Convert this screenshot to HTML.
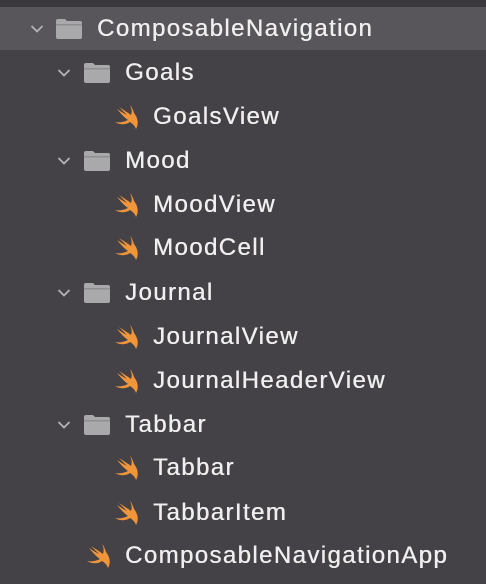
<!DOCTYPE html>
<html><head><style>
body{margin:0;width:486px;height:584px;background:#444246;overflow:hidden;font-family:"Liberation Sans",sans-serif;position:relative}
.top{position:absolute;left:0;top:0;width:486px;height:7px;background:#3b393d}
.sel{position:absolute;left:0;top:7px;width:486px;height:43px;background:#58565a}
.r{position:absolute;height:30px;line-height:30px;font-size:24px;letter-spacing:1.4px;color:#efefef;white-space:nowrap;text-shadow:0.4px 0 0 #efefef}
svg{position:absolute}
</style></head><body>
<div class="top"></div><div class="sel"></div>
<svg width="0" height="0"><defs>
<symbol id="sw" viewBox="0 0 28 28"><path d="M2 18 C7 21 13 21 17 18 C20 20 22 22 23 25 C26 20 25 14 21 9 C20 6 19 3 17 1 C19 5 19 8 18 11 C14 8 9 5 6 3 C9 6 12 9 14 11 C10 9 7 7 4 5 C8 10 12 14 15 16 C11 18 6 19 2 18 Z" fill="#f0953a"/></symbol>
<symbol id="fd" viewBox="0 0 28 22"><path d="M1 3 Q1 1 3 1 H10 L12 3 H25 Q27 3 27 5 V19 Q27 21 25 21 H3 Q1 21 1 19 Z" fill="#a9a8ab"/><rect x="1" y="6" width="26" height="1.5" fill="#8f8e92"/></symbol>
<symbol id="ch" viewBox="0 0 14 10"><path d="M1.5 2 L7 7.5 L12.5 2" stroke="#b4b3b6" stroke-width="1.8" fill="none"/></symbol>
</defs></svg>

<svg style="left:30px;top:24px" width="14" height="10"><use href="#ch"/></svg>
<svg style="left:55px;top:18px" width="28" height="22"><use href="#fd"/></svg>
<div class="r" style="left:97px;top:14px">ComposableNavigation</div>

<svg style="left:57px;top:68px" width="14" height="10"><use href="#ch"/></svg>
<svg style="left:83px;top:62px" width="28" height="22"><use href="#fd"/></svg>
<div class="r" style="left:125px;top:58px">Goals</div>
<svg style="left:113px;top:104px" width="28" height="28"><use href="#sw"/></svg>
<div class="r" style="left:153px;top:102px">GoalsView</div>

<svg style="left:57px;top:156px" width="14" height="10"><use href="#ch"/></svg>
<svg style="left:83px;top:150px" width="28" height="22"><use href="#fd"/></svg>
<div class="r" style="left:125px;top:146px">Mood</div>
<svg style="left:113px;top:192px" width="28" height="28"><use href="#sw"/></svg>
<div class="r" style="left:153px;top:190px">MoodView</div>
<svg style="left:113px;top:235px" width="28" height="28"><use href="#sw"/></svg>
<div class="r" style="left:153px;top:233px">MoodCell</div>

<svg style="left:57px;top:288px" width="14" height="10"><use href="#ch"/></svg>
<svg style="left:83px;top:282px" width="28" height="22"><use href="#fd"/></svg>
<div class="r" style="left:125px;top:278px">Journal</div>
<svg style="left:113px;top:324px" width="28" height="28"><use href="#sw"/></svg>
<div class="r" style="left:153px;top:322px">JournalView</div>
<svg style="left:113px;top:368px" width="28" height="28"><use href="#sw"/></svg>
<div class="r" style="left:153px;top:366px">JournalHeaderView</div>

<svg style="left:57px;top:420px" width="14" height="10"><use href="#ch"/></svg>
<svg style="left:83px;top:414px" width="28" height="22"><use href="#fd"/></svg>
<div class="r" style="left:125px;top:410px">Tabbar</div>
<svg style="left:113px;top:455px" width="28" height="28"><use href="#sw"/></svg>
<div class="r" style="left:153px;top:453px">Tabbar</div>
<svg style="left:113px;top:500px" width="28" height="28"><use href="#sw"/></svg>
<div class="r" style="left:153px;top:498px">TabbarItem</div>

<svg style="left:85px;top:543px" width="28" height="28"><use href="#sw"/></svg>
<div class="r" style="left:125px;top:541px">ComposableNavigationApp</div>
</body></html>
